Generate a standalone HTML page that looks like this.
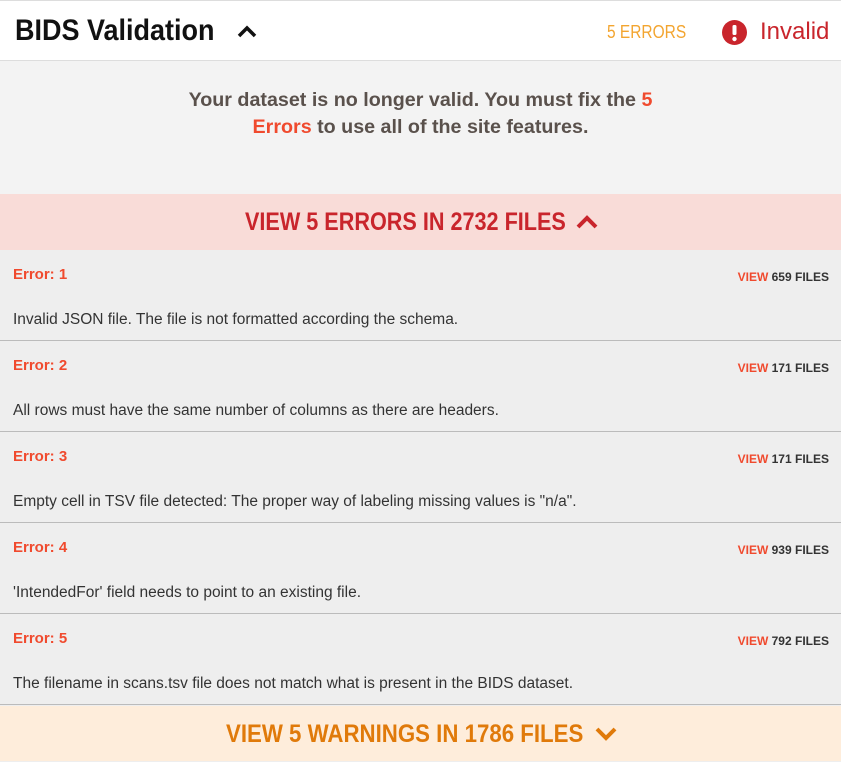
<!DOCTYPE html>
<html><head><style>
*{margin:0;padding:0;box-sizing:border-box}
body{width:841px;height:761px;overflow:hidden;background:#eee;font-family:"Liberation Sans",sans-serif;position:relative}
.hdr{position:absolute;left:0;top:0;width:841px;height:61px;background:#fff;border-top:1px solid #ddd;border-bottom:1px solid #ddd}
.title{position:absolute;left:15px;top:13px;font-size:30px;font-weight:bold;color:#111;transform:scaleX(0.9);transform-origin:0 0;white-space:nowrap}
.cnt{position:absolute;left:607px;top:21px;font-size:18px;color:#f3a530;transform:scaleX(0.86);transform-origin:0 0;white-space:nowrap}
.inv{position:absolute;left:760px;top:17px;font-size:24px;color:#c9252c}
.msg{position:absolute;left:0;top:61px;width:841px;height:133px;background:#f3f3f3;text-align:center;padding-top:26px;font-size:19.7px;font-weight:bold;color:#5a514c;line-height:27px}
.red{color:#f04a2e}
.bar{position:absolute;left:0;width:841px;height:56px;font-weight:bold;font-size:25px;line-height:56px;white-space:nowrap}
.row{position:absolute;left:0;width:841px;height:91px;border-bottom:1px solid #bbb;background:#eee}
.row .e{position:absolute;left:13px;top:16px;font-size:15px;font-weight:bold;color:#f04a2e}
.row .v{position:absolute;right:12px;top:20px;font-size:12px;font-weight:bold;color:#333}
.row .v b{color:#f04a2e}
.row .t{position:absolute;left:13px;top:61px;font-size:15.5px;color:#333;white-space:nowrap}
</style></head><body>
<div class="hdr">
<div class="title">BIDS Validation</div>
<svg style="position:absolute;left:237px;top:22px" width="20" height="16" viewBox="0 0 20 16"><path d="M2 13 L10 5 L18 13" fill="none" stroke="#111" stroke-width="3.5"/></svg>
<div class="cnt">5 ERRORS</div>
<svg style="position:absolute;left:722px;top:19px" width="25" height="25" viewBox="0 0 25 25"><circle cx="12.5" cy="12.5" r="12.5" fill="#c9252c"/><rect x="10.5" y="5" width="4" height="10" rx="1.5" fill="#fff"/><circle cx="12.5" cy="19" r="2.2" fill="#fff"/></svg>
<div class="inv">Invalid</div>
</div>
<div class="msg">Your dataset is no longer valid. You must fix the <span class="red">5</span><br><span class="red">Errors</span> to use all of the site features.</div>
<div class="bar" style="top:194px;background:#f9dcd8;color:#c9252c"><span style="position:absolute;left:245px;transform:scaleX(0.865);transform-origin:0 0">VIEW 5 ERRORS IN 2732 FILES</span><svg style="position:absolute;left:576px;top:20px" width="22" height="16" viewBox="0 0 22 16"><path d="M2 13 L11 4 L20 13" fill="none" stroke="#c9252c" stroke-width="4"/></svg></div>
<div class="row" style="top:250px"><div class="e">Error: 1</div><div class="v"><b>VIEW</b> 659 FILES</div><div class="t">Invalid JSON file. The file is not formatted according the schema.</div></div>
<div class="row" style="top:341px"><div class="e">Error: 2</div><div class="v"><b>VIEW</b> 171 FILES</div><div class="t">All rows must have the same number of columns as there are headers.</div></div>
<div class="row" style="top:432px"><div class="e">Error: 3</div><div class="v"><b>VIEW</b> 171 FILES</div><div class="t">Empty cell in TSV file detected: The proper way of labeling missing values is "n/a".</div></div>
<div class="row" style="top:523px"><div class="e">Error: 4</div><div class="v"><b>VIEW</b> 939 FILES</div><div class="t">'IntendedFor' field needs to point to an existing file.</div></div>
<div class="row" style="top:614px"><div class="e">Error: 5</div><div class="v"><b>VIEW</b> 792 FILES</div><div class="t">The filename in scans.tsv file does not match what is present in the BIDS dataset.</div></div>
<div class="bar" style="top:706px;height:55px;background:#feeddb;color:#e07a0a"><span style="position:absolute;left:226px;transform:scaleX(0.89);transform-origin:0 0">VIEW 5 WARNINGS IN 1786 FILES</span><svg style="position:absolute;left:595px;top:20px" width="22" height="16" viewBox="0 0 22 16"><path d="M2 3 L11 12 L20 3" fill="none" stroke="#e07a0a" stroke-width="4"/></svg></div>
</body></html>
